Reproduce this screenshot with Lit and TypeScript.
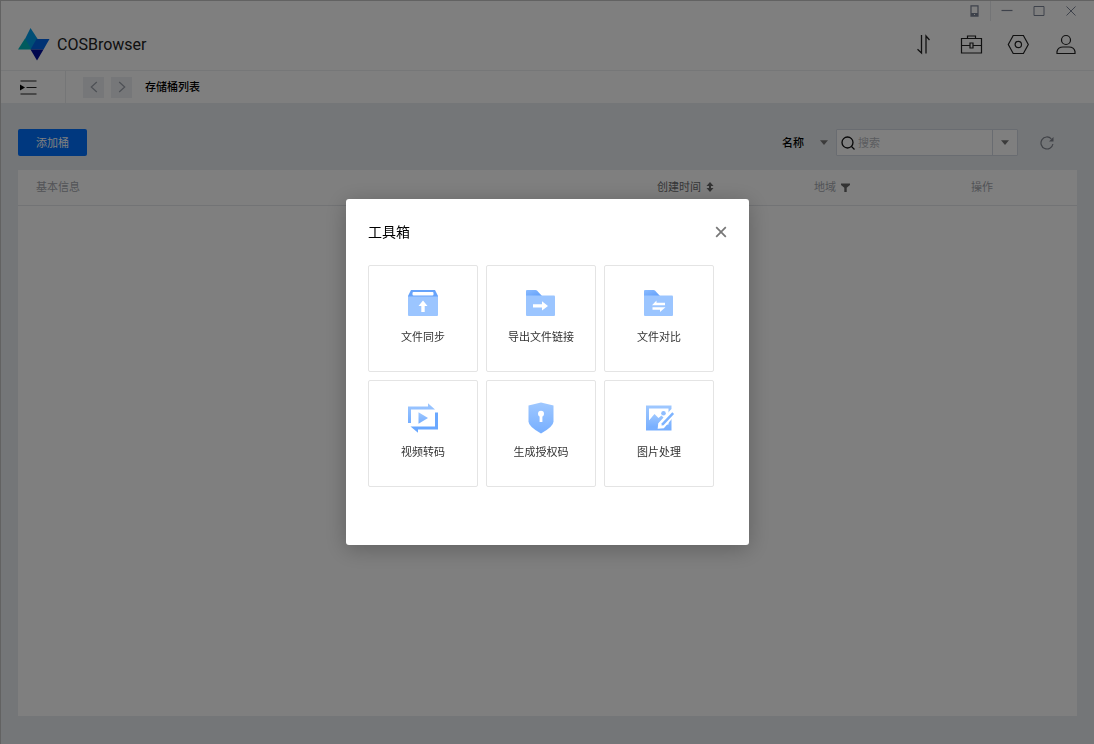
import { LitElement, html, css, svg } from "lit";
import { customElement, property, state } from "lit/decorators.js";

type Tool = { id: string; label: string };

const TOOLS: Tool[] = [
  { id: "sync", label: "文件同步" },
  { id: "export", label: "导出文件链接" },
  { id: "compare", label: "文件对比" },
  { id: "video", label: "视频转码" },
  { id: "auth", label: "生成授权码" },
  { id: "image", label: "图片处理" },
];

const toolIcons: Record<string, unknown> = {
  sync: svg`
    <path d="M4 3h24l3 6v1H1V9z" fill="#66a3fb"/>
    <rect x="5.500" y="5" width="21" height="3.500" rx="1" fill="#fff"/>
    <path d="M1 9.500h30V28q0 1-1 1H2q-1 0-1-1z" fill="#9bc5ff"/>
    <path d="M16 13.500l4.500 5.500h-2.800v6h-3.400v-6h-2.800z" fill="#fff"/>`,
  export: svg`
    <path d="M1 9V4q0-1 1-1h8.500q1 0 1.700.7L17 9z" fill="url(#fold)"/>
    <path d="M1 8.500h28q1 0 1 1V28q0 1-1 1H2q-1 0-1-1z" fill="#9bc5ff"/>
    <path d="M8 17.300h9v-3L23 19l-6 4.500v-3H8z" fill="#fff"/>`,
  compare: svg`
    <path d="M1 9V4q0-1 1-1h8.500q1 0 1.700.7L17 9z" fill="url(#fold)"/>
    <path d="M1 8.500h28q1 0 1 1V28q0 1-1 1H2q-1 0-1-1z" fill="#9bc5ff"/>
    <path d="M13.500 13.500v2.200h8.500v2.500H9zM17 25v-2.300H9.500v-2.500H22.500z" fill="#fff"/>`,
  video: svg`
    <path d="M1 21V4.500h20V1.300L28 7.500H4V21z" fill="url(#down)"/>
    <path d="M31 10.500V27.500H11v3.200L3.500 24.500H28v-14z" fill="#6aa8ff"/>
    <path d="M11.500 10.300L21 16l-9.500 5.700z" fill="url(#down)"/>`,
  auth: svg`
    <path d="M16 .5L28.500 3.500V19.500Q28.500 24.500 16 31.500Q3.500 24.500 3.500 19.500V3.500z" fill="url(#down)"/>
    <circle cx="16" cy="11.800" r="3" fill="#fff"/>
    <path d="M14.600 12h2.800v8h-2.800z" fill="#fff"/>`,
  image: svg`
    <path d="M3 3.500h25.500v25H3z" fill="url(#down)"/>
    <path d="M6 6.500h19.500v16H16.500L11.500 13 6 19z" fill="#fff"/>
    <path d="M6 18.500l5.500-6.500 4 4 3-2.500 3 3-2 9H6z" fill="url(#down)"/>
    <circle cx="20.500" cy="11.300" r="2.300" fill="#8fbdff"/>
    <path d="M28.500 8l4 3.500L20.500 25.500l-5 .5.500-4.500z" fill="#fff" stroke="#fff" stroke-width="1.500"/>
    <path d="M29.300 10.200l1.800 1.700-10.600 11.300-2 .3.300-2.200z" fill="#7db3ff"/>`,
};

@customElement("tool-card")
class ToolCard extends LitElement {
  @property() label = "";
  @property() icon = "";

  static styles = css`
    :host { display: block; }
    .card {
      display: flex;
      flex-direction: column;
      align-items: center;
      gap: 10px;
      width: 100%;
      height: 100%;
      box-sizing: border-box;
      padding: 21px 0 26px;
      border: 1px solid #e4e4e4;
      border-radius: 2px;
      background: #fff;
      color: #333;
      font-family: inherit;
      font-size: 11px;
      line-height: 16px;
      cursor: pointer;
    }
    .icon { display: block; width: 32px; height: 32px; }
  `;

  render() {
    return html`<button class="card" type="button">
      <svg class="icon" viewBox="0 0 32 32" aria-hidden="true">
        <defs>
          <linearGradient id="fold" x1="0" y1="0" x2="1" y2="1">
            <stop offset="0" stop-color="#8cbcff"/><stop offset="1" stop-color="#5f9efa"/>
          </linearGradient>
          <linearGradient id="down" x1="0" y1="0" x2="0" y2="1">
            <stop offset="0" stop-color="#9fc8ff"/><stop offset="1" stop-color="#76aeff"/>
          </linearGradient>
        </defs>
        ${toolIcons[this.icon]}
      </svg>
      <span>${this.label}</span>
    </button>`;
  }
}

@customElement("app-root")
class AppRoot extends LitElement {
  @state() private toolboxOpen = true;

  static styles = css`
    :host {
      display: block;
      font-family: "Liberation Sans", "Noto Sans CJK SC", sans-serif;
      font-size: 11px;
      line-height: 16px;
      color: #000;
    }
    button {
      display: flex;
      align-items: center;
      justify-content: center;
      margin: 0;
      padding: 0;
      border: 0;
      background: none;
      color: inherit;
      font: inherit;
      cursor: pointer;
    }
    svg { display: block; fill: none; stroke: currentColor; }
    .window {
      display: flex;
      flex-direction: column;
      box-sizing: border-box;
      min-height: 100vh;
      border-top: 1px solid #c4c4c4;
      border-left: 1px solid #c4c4c4;
      background: #e9ecf0;
    }
    .header {
      display: flex;
      justify-content: space-between;
      height: 69px;
      background: #fff;
      border-bottom: 1px solid #eceef1;
    }
    .brand {
      display: flex;
      align-items: center;
      gap: 7px;
      padding: 18px 0 0 17px;
      color: #222;
      font-family: Roboto, "Liberation Sans", sans-serif;
      font-size: 16px;
    }
    .side {
      display: flex;
      flex-direction: column;
      align-items: flex-end;
      gap: 11px;
    }
    .controls {
      display: flex;
      align-items: center;
      height: 20px;
      padding-right: 7px;
      color: #7c8496;
    }
    .controls button { width: 32px; height: 20px; }
    .controls .phone { width: 32px; border-right: 1px solid #e6e8ec; }
    .actions { display: flex; gap: 23px; padding-right: 16px; color: #222; }
    .actions button { width: 24px; height: 24px; }
    .nav {
      display: flex;
      align-items: center;
      height: 32px;
      background: #fff;
    }
    .menu {
      width: 65px;
      height: 32px;
      padding-right: 10px;
      border-right: 1px solid #eaecef;
      box-sizing: border-box;
      color: #222;
    }
    .arrows { display: flex; gap: 7px; padding: 0 13px 0 17px; color: #9aa0aa; }
    .arrows button { width: 21px; height: 21px; background: #eceef2; }
    .crumb { margin: 0; font-size: 11px; font-weight: 500; }
    .content {
      flex: 1;
      display: flex;
      flex-direction: column;
      gap: 14px;
      padding: 26px 17px 28px;
    }
    .bar { display: flex; align-items: center; justify-content: space-between; height: 27px; }
    .add { width: 69px; height: 27px; border-radius: 2px; background: #0070ff; color: #fff; }
    .filters { display: flex; align-items: center; }
    .pick { display: grid; align-items: center; margin-right: 8px; }
    .pick select, .pick svg { grid-area: 1 / 1; }
    .pick select {
      width: 46px;
      height: 27px;
      padding: 0;
      border: 0;
      appearance: none;
      background: none;
      color: #000;
      font: inherit;
      font-weight: 500;
    }
    .pick svg { justify-self: end; pointer-events: none; }
    .caret { color: #777; }
    .search {
      display: flex;
      align-items: center;
      width: 182px;
      height: 27px;
      box-sizing: border-box;
      border: 1px solid #d3d9e2;
      border-radius: 1px;
      background: #fff;
      color: #111;
    }
    .search label { padding: 0 3px 0 4px; }
    .search input {
      flex: 1;
      min-width: 0;
      padding: 0;
      border: 0;
      background: none;
      outline: none;
      font: inherit;
    }
    .search input::placeholder { color: #b6b9c0; opacity: 1; }
    .search button { width: 25px; height: 25px; border-left: 1px solid #d3d9e2; color: #666; }
    .refresh { width: 16px; height: 16px; margin: 0 22px 0 21px; color: #80858f; }
    .panel { flex: 1; background: #fff; }
    .table { width: 100%; table-layout: fixed; border-collapse: collapse; }
    .table th {
      height: 35px;
      padding: 0 0 0 18px;
      border-bottom: 1px solid #e4e6ea;
      box-sizing: border-box;
      text-align: left;
      font-weight: 400;
      color: #a4a7ae;
    }
    .table th button { gap: 5px; }
    .col { width: 157px; }
    .last { width: 124px; }
    .table .sorted { color: #6c6d70; }
    .mark { color: #666; fill: currentColor; stroke: none; }
    .overlay {
      position: fixed;
      inset: 0;
      display: flex;
      align-items: center;
      justify-content: center;
      padding-left: 1px;
      background: rgba(0, 0, 0, 0.5);
    }
    .modal {
      width: 403px;
      box-sizing: border-box;
      padding: 22px 22px 58px;
      border-radius: 3px;
      background: #fff;
      box-shadow: 0 4px 22px rgba(0, 0, 0, 0.25);
    }
    .head { display: flex; align-items: center; justify-content: space-between; margin-bottom: 22px; }
    .head h2 { margin: 0; font-size: 14px; font-weight: 400; line-height: 22px; }
    .close { color: #777; }
    .tools {
      display: grid;
      grid-template-columns: repeat(3, 110px);
      gap: 8px;
    }
  `;

  private caret() {
    return html`<svg class="caret" width="8" height="5" viewBox="0 0 8 5" aria-hidden="true">
      <path d="M0 .3h8L4 5z" fill="currentColor" stroke="none"/></svg>`;
  }

  private renderHeader() {
    return html`
      <header class="header">
        <div class="brand">
          <svg width="32" height="33" viewBox="0 0 32 33" aria-hidden="true">
            <g stroke="none">
              <path d="M12.500 0L20 11.500 15 21H6.500L7 11z" fill="#009dea"/>
              <path d="M7 10.500L13.500 21.500H0z" fill="#00b7bd"/>
              <path d="M18.500 11H31.500L25.500 21.500H12.500z" fill="#0065e8"/>
              <path d="M12.500 21.500H25.500L19 32.500z" fill="#000d9c"/>
            </g>
          </svg>
          <span>COSBrowser</span>
        </div>
        <div class="side">
          <div class="controls">
            <button class="phone" type="button" aria-label="手机">
              <svg width="9" height="12" viewBox="0 0 9 12"><path d="M1 .8h7v10.400H1z" stroke-width="1.200"/><path d="M1 8h7v3H1z" fill="currentColor" stroke="none"/><path d="M4 9h1v1H4z" fill="#fff" stroke="none"/></svg>
            </button>
            <button type="button" aria-label="最小化">
              <svg width="12" height="12" viewBox="0 0 12 12"><path d="M.5 5.500h11" stroke-width="1.200"/></svg>
            </button>
            <button type="button" aria-label="最大化">
              <svg width="12" height="12" viewBox="0 0 12 12"><path d="M1 1.500h10v9H1z"/></svg>
            </button>
            <button type="button" aria-label="关闭">
              <svg width="12" height="12" viewBox="0 0 12 12"><path d="M1.500 1.500l9 9m0-9l-9 9"/></svg>
            </button>
          </div>
          <nav class="actions">
            <button type="button" aria-label="传输">
              <svg width="24" height="24" viewBox="0 0 24 24"><path d="M8.500 3v18L4.500 17.300M13 21.500V4l3.500 4" stroke-width="1.300"/></svg>
            </button>
            <button type="button" aria-label="工具箱" @click=${() => (this.toolboxOpen = true)}>
              <svg width="24" height="24" viewBox="0 0 24 24" stroke-width="1.200"><path d="M1.500 6.500h20v14.500h-20zM7.500 6.500V4h8v2.500M1.500 13.500h8.500m3 0h8.500M10 11h3v5h-3z"/></svg>
            </button>
            <button type="button" aria-label="设置">
              <svg width="24" height="24" viewBox="0 0 24 24" stroke-width="1.200"><path d="M6.200 3.500h10.200L21.300 12.500l-4.900 9H6.200L1.300 12.500z"/><circle cx="11.300" cy="12.500" r="3.200"/></svg>
            </button>
            <button type="button" aria-label="账户">
              <svg width="24" height="24" viewBox="0 0 24 24" stroke-width="1.200"><circle cx="12" cy="8" r="4.500"/><path d="M3 21.500V19.500Q4 15 9 15h6q5 0 6 4.500v2z"/></svg>
            </button>
          </nav>
        </div>
      </header>`;
  }

  private renderNav() {
    return html`
      <nav class="nav">
        <button class="menu" type="button" aria-label="展开菜单">
          <svg width="17" height="15" viewBox="0 0 17 15"><path d="M.5 1h16M6.500 7.500h10M.5 14h16" stroke-width="1.200"/><path d="M0 4.500l5 3-5 3z" fill="#000" stroke="none"/></svg>
        </button>
        <div class="arrows">
          <button type="button" aria-label="后退">
            <svg width="8" height="12" viewBox="0 0 8 12"><path d="M6.800 1L1.300 6l5.500 5" stroke-width="1.200"/></svg>
          </button>
          <button type="button" aria-label="前进">
            <svg width="8" height="12" viewBox="0 0 8 12"><path d="M1.200 1l5.500 5-5.500 5" stroke-width="1.200"/></svg>
          </button>
        </div>
        <h1 class="crumb">存储桶列表</h1>
      </nav>`;
  }

  private renderContent() {
    return html`
      <main class="content">
        <div class="bar">
          <button class="add" type="button">添加桶</button>
          <div class="filters">
            <div class="pick">
              <select aria-label="搜索字段"><option>名称</option></select>
              ${this.caret()}
            </div>
            <div class="search">
              <label for="q" aria-label="搜索">
                <svg width="14" height="14" viewBox="0 0 14 14" stroke-width="1.300"><circle cx="6.500" cy="6.500" r="5.500"/><path d="M10.500 10.500l3 3"/></svg>
              </label>
              <input id="q" type="text" placeholder="搜索" />
              <button type="button" aria-label="更多">${this.caret()}</button>
            </div>
            <button class="refresh" type="button" aria-label="刷新">
              <svg width="14" height="14" viewBox="0 0 14 14" stroke-width="1.200"><path d="M12.900 8A6 6 0 1 1 11.300 2.800"/><path d="M13.500 1v4.500H9z" fill="currentColor" stroke="none"/></svg>
            </button>
          </div>
        </div>
        <section class="panel">
          <table class="table">
            <thead>
              <tr>
                <th scope="col">基本信息</th>
                <th scope="col" class="col sorted">
                  <button type="button">创建时间
                    <svg class="mark" width="8" height="10" viewBox="0 0 8 10" aria-hidden="true"><path d="M4 0l3.500 4H5v2h2.500L4 10 .5 6H3V4H.5z"/></svg>
                  </button>
                </th>
                <th scope="col" class="col">
                  <button type="button">地域
                    <svg class="mark" width="9" height="9" viewBox="0 0 9 9" aria-hidden="true"><path d="M0 .5h9V2L5.700 4.800V9H3.300V4.800L0 2z"/></svg>
                  </button>
                </th>
                <th scope="col" class="last">操作</th>
              </tr>
            </thead>
            <tbody></tbody>
          </table>
        </section>
      </main>`;
  }

  private renderToolbox() {
    return html`
      <div class="overlay">
        <section class="modal" role="dialog" aria-modal="true" aria-labelledby="tt">
          <div class="head">
            <h2 id="tt">工具箱</h2>
            <button class="close" type="button" aria-label="关闭" @click=${() => (this.toolboxOpen = false)}>
              <svg width="12" height="12" viewBox="0 0 12 12"><path d="M1.200 1.200l9.600 9.600m0-9.600l-9.600 9.600" stroke-width="1.700"/></svg>
            </button>
          </div>
          <div class="tools">
            ${TOOLS.map((t) => html`<tool-card .icon=${t.id} .label=${t.label}></tool-card>`)}
          </div>
        </section>
      </div>`;
  }

  render() {
    return html`
      <div class="window" lang="zh-CN">
        ${this.renderHeader()} ${this.renderNav()} ${this.renderContent()}
      </div>
      ${this.toolboxOpen ? this.renderToolbox() : ""}`;
  }
}
